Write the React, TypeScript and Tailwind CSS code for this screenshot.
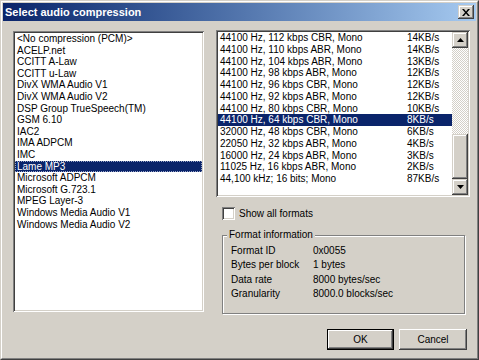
const codecs = [
  "<No compression (PCM)>",
  "ACELP.net",
  "CCITT A-Law",
  "CCITT u-Law",
  "DivX WMA Audio V1",
  "DivX WMA Audio V2",
  "DSP Group TrueSpeech(TM)",
  "GSM 6.10",
  "IAC2",
  "IMA ADPCM",
  "IMC",
  "Lame MP3",
  "Microsoft ADPCM",
  "Microsoft G.723.1",
  "MPEG Layer-3",
  "Windows Media Audio V1",
  "Windows Media Audio V2",
];

const formats: [string, string][] = [
  ["44100 Hz, 112 kbps CBR, Mono", "14KB/s"],
  ["44100 Hz, 110 kbps ABR, Mono", "14KB/s"],
  ["44100 Hz, 104 kbps ABR, Mono", "13KB/s"],
  ["44100 Hz, 98 kbps ABR, Mono", "12KB/s"],
  ["44100 Hz, 96 kbps CBR, Mono", "12KB/s"],
  ["44100 Hz, 92 kbps ABR, Mono", "12KB/s"],
  ["44100 Hz, 80 kbps CBR, Mono", "10KB/s"],
  ["44100 Hz, 64 kbps CBR, Mono", "8KB/s"],
  ["32000 Hz, 48 kbps CBR, Mono", "6KB/s"],
  ["22050 Hz, 32 kbps ABR, Mono", "4KB/s"],
  ["16000 Hz, 24 kbps ABR, Mono", "3KB/s"],
  ["11025 Hz, 16 kbps ABR, Mono", "2KB/s"],
  ["44,100 kHz; 16 bits; Mono", "87KB/s"],
];

const info: [string, string][] = [
  ["Format ID", "0x0055"],
  ["Bytes per block", "1 bytes"],
  ["Data rate", "8000 bytes/sec"],
  ["Granularity", "8000.0 blocks/sec"],
];

const sunken =
  "shadow-[inset_1px_1px_#808080,inset_-1px_-1px_#fff,inset_2px_2px_#404040,inset_-2px_-2px_#d4d0c8]";
const raised =
  "shadow-[inset_-1px_-1px_#404040,inset_1px_1px_#d4d0c8,inset_-2px_-2px_#808080,inset_2px_2px_#fff]";
const btn =
  "shadow-[inset_-1px_-1px_#404040,inset_1px_1px_#fff,inset_-2px_-2px_#808080,inset_2px_2px_#d4d0c8]";

function Arrow({ up }: { up: boolean }) {
  return (
    <svg width="7" height="4" viewBox="0 0 7 4">
      <path d={up ? "M3.5 0 L7 4 L0 4 Z" : "M0 0 L7 0 L3.5 4 Z"} fill="#000" />
    </svg>
  );
}

export default function App() {
  return (
    <div className="w-[479px] h-[360px] bg-[#d4d0c8] font-['Liberation_Sans',Arial,sans-serif] text-[10px] text-black border border-t-[#d4d0c8] border-l-[#d4d0c8] border-r-[#404040] border-b-[#404040]">
      <div className="h-full flex flex-col p-px border border-t-white border-l-white border-r-[#808080] border-b-[#808080]">
        <div className="h-[18px] flex items-center justify-between pl-[2px] pr-[2px] bg-linear-to-r from-[#0a246a] to-[#a6caf0]">
          <span className="font-bold text-white text-[11px] leading-none">Select audio compression</span>
          <div className={`w-[16px] h-[14px] bg-[#d4d0c8] flex items-center justify-center ${raised}`}>
            <svg width="8" height="7" viewBox="0 0 8 7">
              <path d="M0 0h2l2 2.5L6 0h2L5 3.5 8 7H6L4 4.5 2 7H0l3-3.5z" fill="#000" />
            </svg>
          </div>
        </div>

        <div className="flex flex-col pt-[9px]">
          <div className="flex items-start">
            <div className={`ml-[10px] mt-px w-[191px] h-[281px] bg-white p-[2px] ${sunken}`}>
              {codecs.map((c, i) => (
                <div
                  key={c}
                  className={`h-[11.6px] leading-[11.6px] pl-[2px] whitespace-nowrap ${
                    i === 11 ? "bg-[#0a246a] text-white outline outline-1 outline-dotted outline-[#9aa6c8] -outline-offset-1" : ""
                  }`}
                >
                  {c}
                </div>
              ))}
            </div>

            <div className="ml-[12px] w-[254px] flex flex-col">
              <div className={`h-[167px] bg-white p-[2px] flex ${sunken}`}>
                <div className="flex-1">
                  {formats.map(([a, b], i) => (
                    <div
                      key={a}
                      className={`h-[11.75px] leading-[11.75px] pl-[2px] grid grid-cols-[187px_1fr] whitespace-nowrap ${
                        i === 7 ? "bg-[#0a246a] text-white" : ""
                      }`}
                    >
                      <span>{a}</span>
                      <span>{b}</span>
                    </div>
                  ))}
                </div>
                <div className="w-[16px] flex flex-col">
                  <div className={`h-[16px] bg-[#d4d0c8] flex items-center justify-center ${raised}`}>
                    <Arrow up />
                  </div>
                  <div className="flex-1 flex flex-col justify-end bg-[repeating-conic-gradient(#fff_0_25%,#d4d0c8_0_50%)] bg-[length:2px_2px]">
                    <div className={`h-[45px] bg-[#d4d0c8] ${raised}`} />
                  </div>
                  <div className={`h-[16px] bg-[#d4d0c8] flex items-center justify-center ${raised}`}>
                    <Arrow up={false} />
                  </div>
                </div>
              </div>

              <div className="mt-[9px] ml-[6px] flex items-center gap-[4px]">
                <div className={`w-[13px] h-[13px] bg-white ${sunken}`} />
                <span>Show all formats</span>
              </div>

              <div className="relative mt-[14px] ml-[6px] w-[243px] h-[79px] border border-[#808080] shadow-[inset_1px_1px_#fff,1px_1px_#fff] pt-[8px] pl-[8px]">
                <span className="absolute -top-[7px] left-[4px] px-[2px] bg-[#d4d0c8] leading-[12px]">Format information</span>
                {info.map(([k, v]) => (
                  <div key={k} className="h-[14.4px] leading-[14.4px] grid grid-cols-[82px_1fr]">
                    <span>{k}</span>
                    <span>{v}</span>
                  </div>
                ))}
              </div>
            </div>
          </div>

          <div className="mt-[15px] flex justify-end gap-[5px] pr-[9px]">
            <div className="w-[67px] h-[21px] border border-black">
              <div className={`h-full bg-[#d4d0c8] flex items-center justify-center ${btn}`}>OK</div>
            </div>
            <div className={`w-[68px] h-[21px] bg-[#d4d0c8] flex items-center justify-center ${btn}`}>Cancel</div>
          </div>
        </div>
      </div>
    </div>
  );
}
